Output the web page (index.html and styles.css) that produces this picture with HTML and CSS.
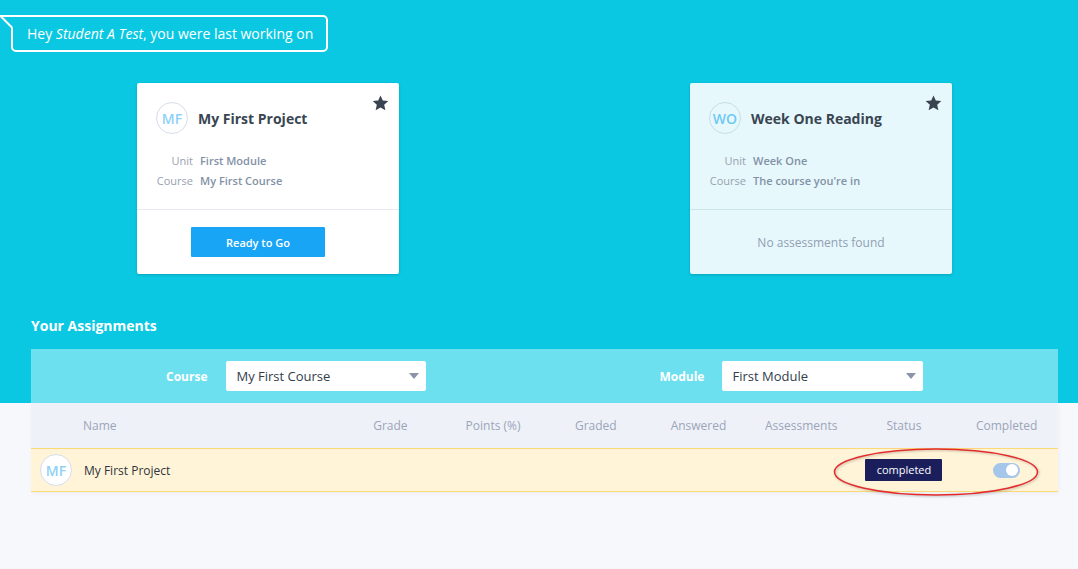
FILE: index.html
```html
<!DOCTYPE html>
<html lang="en">
<head>
<meta charset="utf-8">
<title>Dashboard</title>
<link rel="stylesheet" href="styles.css">
</head>
<body>
<div class="hero">
  <div class="greeting">
    <svg class="tail" width="16" height="15" viewBox="0 0 16 15"><polygon points="1,1 16,1 16,15 12,12" fill="#0ac8e2"/><polyline points="16,1 0.5,1 12,12.5" fill="none" stroke="#fff" stroke-width="2"/></svg>
    Hey <em>Student A Test</em>, you were last working on
  </div>
  <div class="cards">
    <div class="card">
      <svg class="star" width="17" height="16" viewBox="0 0 24 23"><path d="M12 0.8l3.3 7.2 7.9.8-5.9 5.3 1.7 7.8L12 17.9l-7 4 1.7-7.8L.8 8.8l7.9-.8z" fill="#3a4350"/></svg>
      <div class="card-top">
        <div class="card-head">
          <div class="avatar">MF</div>
          <div class="card-title">My First Project</div>
        </div>
        <div class="meta">
          <span class="meta-label">Unit</span><span class="meta-value">First Module</span>
          <span class="meta-label">Course</span><span class="meta-value">My First Course</span>
        </div>
      </div>
      <div class="card-bottom card-bottom-btn">
        <button class="btn">Ready to Go</button>
      </div>
    </div>
    <div class="card card-alt">
      <svg class="star" width="17" height="16" viewBox="0 0 24 23"><path d="M12 0.8l3.3 7.2 7.9.8-5.9 5.3 1.7 7.8L12 17.9l-7 4 1.7-7.8L.8 8.8l7.9-.8z" fill="#3a4350"/></svg>
      <div class="card-top">
        <div class="card-head">
          <div class="avatar">WO</div>
          <div class="card-title">Week One Reading</div>
        </div>
        <div class="meta">
          <span class="meta-label">Unit</span><span class="meta-value">Week One</span>
          <span class="meta-label">Course</span><span class="meta-value">The course you're in</span>
        </div>
      </div>
      <div class="card-bottom">
        <span class="empty">No assessments found</span>
      </div>
    </div>
  </div>
  <h2 class="section-title">Your Assignments</h2>
  <div class="filters">
    <div class="filter">
      <span class="filter-label">Course</span>
      <div class="select"><span>My First Course</span><i class="caret"></i></div>
    </div>
    <div class="filter filter-module">
      <span class="filter-label">Module</span>
      <div class="select"><span>First Module</span><i class="caret"></i></div>
    </div>
  </div>
</div>
<div class="table">
  <div class="thead">
    <div class="th th-name">Name</div>
    <div class="th">Grade</div>
    <div class="th">Points (%)</div>
    <div class="th">Graded</div>
    <div class="th">Answered</div>
    <div class="th">Assessments</div>
    <div class="th">Status</div>
    <div class="th">Completed</div>
  </div>
  <div class="trow">
    <div class="td td-name"><div class="avatar avatar-row">MF</div><span>My First Project</span></div>
    <div class="td"></div>
    <div class="td"></div>
    <div class="td"></div>
    <div class="td"></div>
    <div class="td"></div>
    <div class="td"><span class="badge">completed</span></div>
    <div class="td"><span class="toggle"><span class="knob"></span></span></div>
    <svg class="mark" width="210" height="52" viewBox="0 0 210 52"><ellipse cx="105" cy="26" rx="101.5" ry="23" fill="none" stroke="#e42a2c" stroke-width="1.5"/></svg>
  </div>
</div>
</body>
</html>
```
FILE: styles.css
```css
* { box-sizing: border-box; }
html, body { margin: 0; padding: 0; }
body {
  background: #f7f8fc;
  font-family: "Open Sans", "Liberation Sans", sans-serif;
  color: #3b4553;
  height: 569px;
  overflow: hidden;
}
.hero {
  background: #0ac8e2;
  padding: 15px 20px 0 31px;
}
.greeting {
  position: relative;
  display: inline-block;
  margin-left: -20px;
  border: 2px solid #fff;
  border-radius: 5px;
  height: 37px;
  line-height: 33px;
  padding: 0 13px 0 14px;
  color: #fff;
  font-size: 14px;
}
.greeting em { font-style: italic; }
.tail {
  position: absolute;
  left: -13px;
  top: -2px;
  overflow: visible;
}
.cards {
  display: flex;
  gap: 291px;
  padding-left: 106px;
  margin-top: 31px;
}
.card {
  position: relative;
  width: 262px;
  height: 191px;
  background: #fff;
  box-shadow: 0 1px 3px rgba(0, 0, 0, 0.18);
  border-radius: 2px;
  display: flex;
  flex-direction: column;
}
.card-alt { background: #e6f8fb; }
.star {
  position: absolute;
  top: 12px;
  right: 10px;
}
.card-top {
  padding: 19px 19px 18px;
  border-bottom: 1px solid #e6e9ee;
}
.card-alt .card-top { border-bottom-color: #cde4ea; }
.card-head {
  display: flex;
  align-items: center;
  gap: 10px;
}
.avatar {
  width: 32px;
  height: 32px;
  border-radius: 50%;
  border: 1px solid #d6dde8;
  display: flex;
  align-items: center;
  justify-content: center;
  color: #8ed0f7;
  font-size: 14px;
  font-weight: 600;
  flex-shrink: 0;
}
.card-alt .avatar { border-color: #c7dfe8; color: #6fc9f5; }
.card-title {
  font-size: 14px;
  font-weight: 700;
  color: #3a4552;
}
.meta {
  display: grid;
  grid-template-columns: 37px auto;
  column-gap: 7px;
  margin-top: 17px;
  font-size: 11px;
  line-height: 20px;
}
.meta-label {
  text-align: right;
  color: #98a1b1;
  white-space: nowrap;
}
.meta-value {
  color: #8391a6;
  font-weight: 600;
}
.card-bottom {
  flex: 1;
  display: flex;
  align-items: center;
  justify-content: center;
}
.card-bottom-btn { padding-right: 20px; }
.btn {
  width: 134px;
  height: 30px;
  border: 0;
  border-radius: 1px;
  background: #19a5f6;
  color: #fff;
  font-family: inherit;
  font-size: 11px;
  font-weight: 600;
}
.empty {
  color: #91a0b4;
  font-size: 12px;
}
.section-title {
  margin: 42px 0 14px;
  font-size: 14px;
  line-height: 19px;
  font-weight: 700;
  color: #fff;
}
.filters {
  height: 54px;
  background: #6de0ef;
  display: flex;
  align-items: center;
  padding-left: 135px;
}
.filter {
  display: flex;
  align-items: center;
  gap: 19px;
}
.filter-module { margin-left: 233px; gap: 18px; }
.filter-label {
  color: #fff;
  font-size: 12px;
  font-weight: 700;
}
.select {
  position: relative;
  width: 200px;
  height: 30px;
  background: #fff;
  border-radius: 2px;
  display: flex;
  align-items: center;
  padding-left: 10px;
  font-size: 13px;
  color: #323c4b;
}
.filter-module .select { width: 201px; }
.caret {
  position: absolute;
  right: 7px;
  top: 12px;
  width: 0;
  height: 0;
  border-left: 5px solid transparent;
  border-right: 5px solid transparent;
  border-top: 6px solid #8a93a8;
}
.table {
  margin: 0 20px 0 31px;
  box-shadow: 1px 2px 4px rgba(0, 0, 0, 0.04);
}
.thead, .trow {
  display: grid;
  grid-template-columns: 308px repeat(7, 1fr);
  align-items: center;
}
.thead {
  height: 45px;
  background: #eef1f8;
}
.th {
  text-align: center;
  font-size: 12px;
  color: #9ca5b8;
}
.th-name {
  text-align: left;
  padding-left: 52px;
}
.trow {
  position: relative;
  height: 44px;
  background: #fff4d7;
  border-top: 1px solid #fbd978;
  border-bottom: 1px solid #fbd978;
}
.td {
  display: flex;
  justify-content: center;
  align-items: center;
}
.td-name {
  justify-content: flex-start;
  padding-left: 9px;
  gap: 12px;
  font-size: 12px;
  color: #2e3540;
}
.avatar-row {
  background: #fff;
  color: #8ed0f7;
}
.badge {
  display: inline-block;
  width: 77px;
  height: 22px;
  line-height: 22px;
  text-align: center;
  background: #1a1f5c;
  color: #fff;
  font-size: 11px;
  border-radius: 1px;
}
.toggle {
  position: relative;
  display: inline-block;
  width: 27px;
  height: 15px;
  border-radius: 8px;
  background: #a3c6ea;
}
.knob {
  position: absolute;
  right: 2px;
  top: 1.5px;
  width: 12px;
  height: 12px;
  border-radius: 50%;
  background: #fff;
}
.mark {
  position: absolute;
  left: 800px;
  top: -3px;
  filter: drop-shadow(1px 1px 1px rgba(0, 0, 0, 0.25));
  pointer-events: none;
}
```
